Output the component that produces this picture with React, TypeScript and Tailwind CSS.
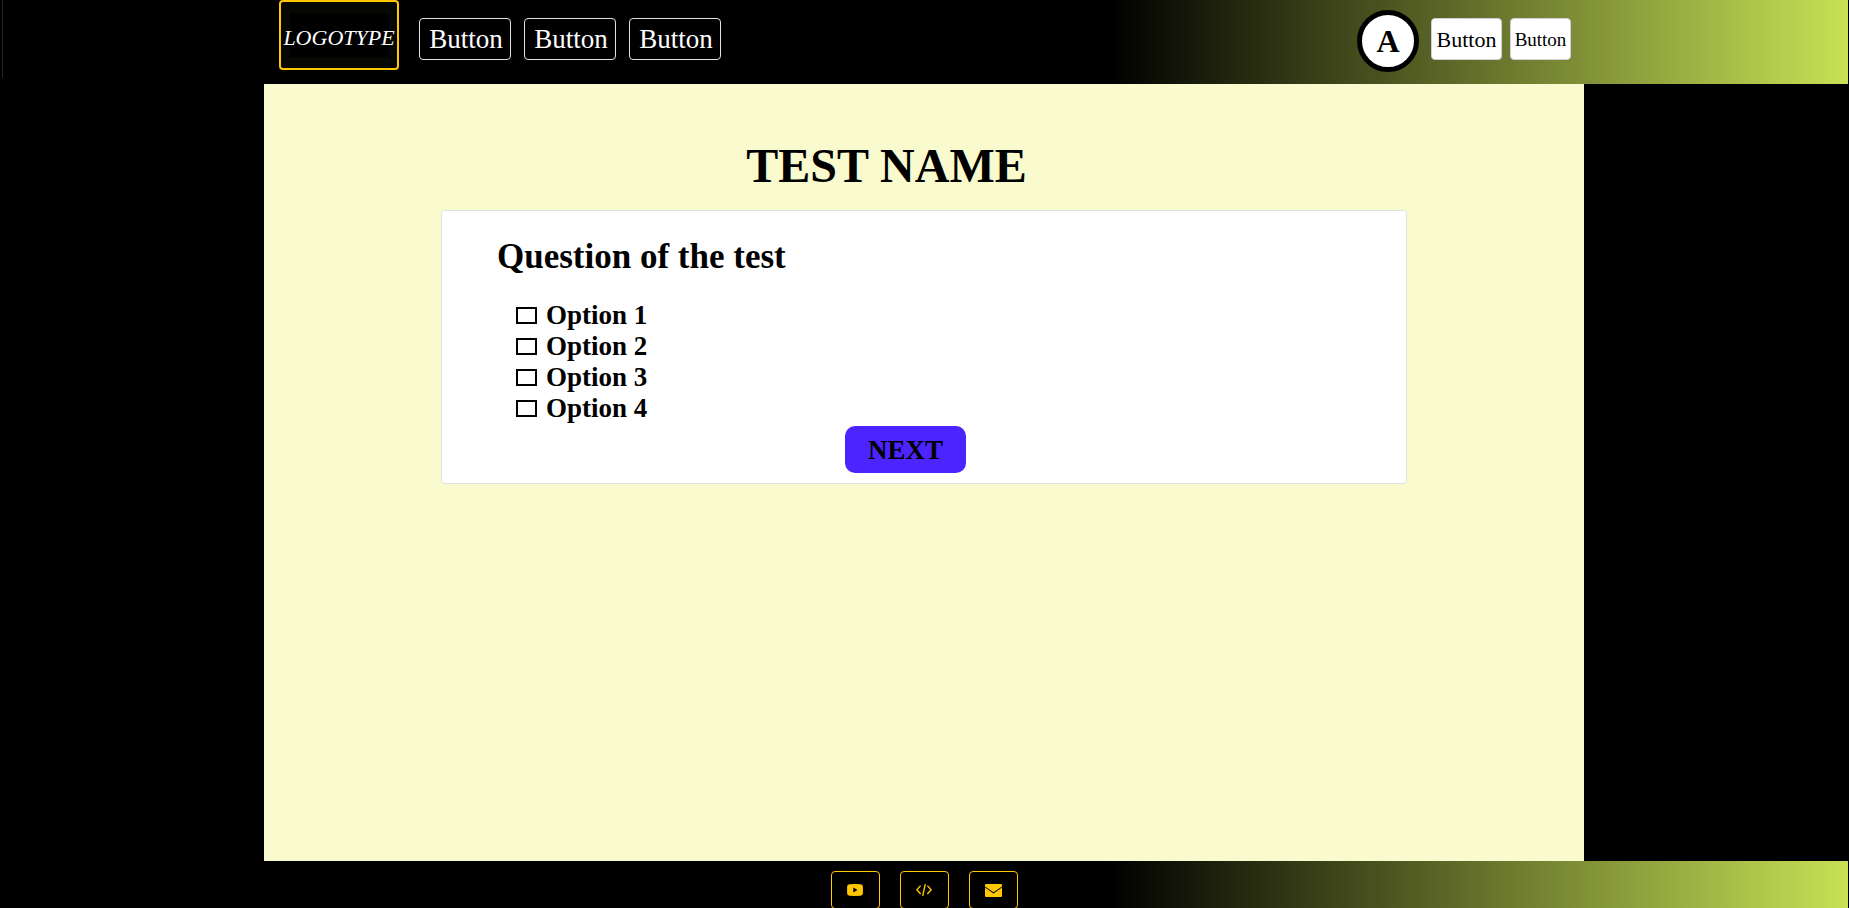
const bar = "bg-[linear-gradient(90deg,#000_60%,#c8e155_100%)]";
const navItems = ["first", "second", "third"];
const options = ["Option 1", "Option 2", "Option 3", "Option 4"];

function YoutubeIcon() {
  return (
    <svg viewBox="0 0 16 12" className="h-3 w-4" fill="currentColor" aria-hidden="true">
      <path
        fillRule="evenodd"
        d="M2.5 0.2Q8 -0.1 13.5 0.2Q15.8 0.4 15.9 2.5V9.5Q15.800 11.600 13.500 11.800Q8 12.100 2.500 11.800Q0.200 11.600 0.100 9.500V2.500Q0.200 0.400 2.500 0.200ZM6.300 3.600V8.400L10.500 6Z"
      />
    </svg>
  );
}

function CodeIcon() {
  return (
    <svg viewBox="0 0 16 12" className="h-3 w-4" fill="none" stroke="currentColor" strokeWidth="1.4" aria-hidden="true">
      <path d="M4.600 1.600L0.900 5.800L4.600 10M11.400 1.600L15.100 5.800L11.400 10M9.300 0.200L6.700 11.800" />
    </svg>
  );
}

function MailIcon() {
  return (
    <svg viewBox="0 0 17 13" className="h-[13px] w-[17px]" fill="currentColor" aria-hidden="true">
      <path d="M1 0H16Q17 0 17 1V2.400L8.500 8.300L0 2.400V1Q0 0 1 0ZM0 3.500L8.500 9.400L17 3.500V12Q17 13 16 13H1Q0 13 0 12Z" />
    </svg>
  );
}

const links = [
  { label: "Video channel", Icon: YoutubeIcon },
  { label: "Source code", Icon: CodeIcon },
  { label: "Email", Icon: MailIcon },
];

export default function App() {
  return (
    <div className="flex h-screen flex-col overflow-hidden bg-black pr-px font-['Liberation_Serif',serif] text-black">
      <header className={`${bar} flex h-[84px] shrink-0 items-start pl-0.5`}>
        <div className="-mr-[3px] h-[78px] w-px shrink-0 bg-[#222]" />
        <div className="mx-auto flex w-full max-w-[1320px] items-start justify-between pr-[13px] pl-[15px]">
          <div className="flex items-start gap-5">
            <a
              href="#"
              className="flex h-[70px] w-[120px] items-center justify-center rounded-sm border-2 border-[#ffc800] bg-[#070704]"
            >
              <span className="flex h-11 w-[99px] items-center justify-center bg-black pt-1 text-[22px] whitespace-nowrap text-white italic">
                LOGOTYPE
              </span>
            </a>
            <nav className="flex gap-[13px] pt-[18px]">
              {navItems.map((item) => (
                <button
                  key={item}
                  className="flex h-[42px] w-[92px] items-center justify-center rounded border border-[#dee2e6] pl-0.5 text-[27px] text-white"
                >
                  Button
                </button>
              ))}
            </nav>
          </div>
          <div className="flex items-start pt-[10px]">
            <div className="mr-3 flex size-[62px] items-center justify-center rounded-full border-[5px] border-black bg-white text-[32px] font-bold">
              A
            </div>
            <div className="flex gap-2 pt-2">
              <button className="h-[42px] w-[71px] rounded border border-[#ced0dc] bg-white text-[22px]">
                Button
              </button>
              <button className="h-[42px] w-[61px] rounded border border-[#ced0dc] bg-white pt-0.5 text-[19px]">
                Button
              </button>
            </div>
          </div>
        </div>
      </header>

      <main className="mx-auto w-full max-w-[1320px] flex-1 bg-[#f9facd] px-[177px] pt-[54px]">
        <h1 className="pr-[75px] text-center text-[48px] leading-[56px] font-bold">TEST NAME</h1>
        <form
          className="mt-4 rounded border border-[#dee2e6] bg-white pt-[25px] pb-[10px] pl-[55px]"
          onSubmit={(e) => e.preventDefault()}
        >
          <fieldset>
            <legend className="text-[35px] leading-[42px] font-bold">Question of the test</legend>
            <div className="mt-[22px] pl-[19px]">
              {options.map((option) => (
                <label key={option} className="flex h-[31px] items-center gap-[9px] text-[27px] leading-[31px] font-bold">
                  <input type="checkbox" className="h-[17px] w-[21px] appearance-none border-2 border-black checked:bg-black" />
                  {option}
                </label>
              ))}
            </div>
          </fieldset>
          <button className="mt-0.5 ml-[348px] block h-[47px] w-[121px] rounded-[10px] bg-[#4b24ff] pt-0.5 text-[27px] font-bold">
            NEXT
          </button>
        </form>
      </main>

      <footer className={`${bar} flex h-[47px] shrink-0 justify-center gap-5 pt-[10px]`}>
        {links.map(({ label, Icon }) => (
          <a
            key={label}
            href="#"
            aria-label={label}
            className="flex h-[38px] w-[49px] items-center justify-center rounded border border-[#ffc800] text-[#ffc800]"
          >
            <Icon />
          </a>
        ))}
      </footer>
    </div>
  );
}
